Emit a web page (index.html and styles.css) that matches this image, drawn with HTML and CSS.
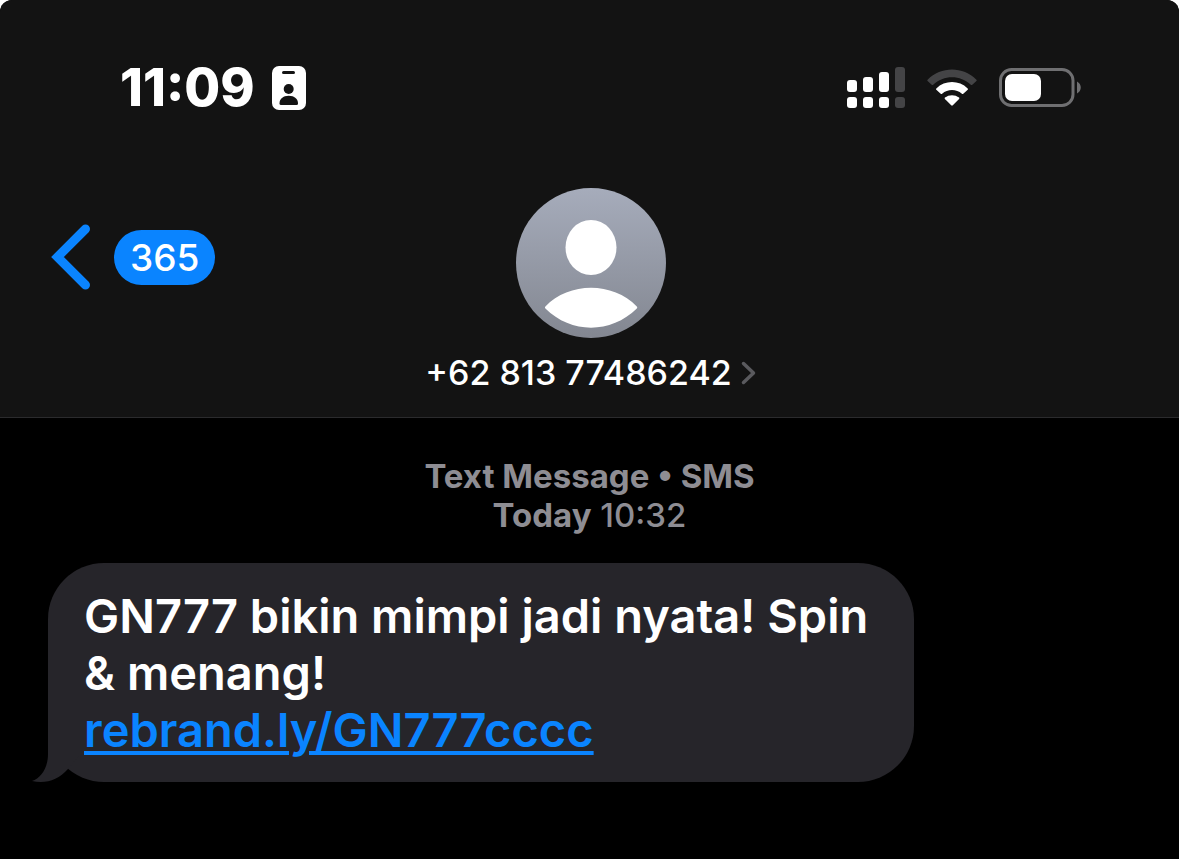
FILE: index.html
```html
<!DOCTYPE html>
<html lang="id">
<head>
<meta charset="utf-8">
<meta name="viewport" content="width=device-width, initial-scale=1">
<title>+62 813 77486242</title>
<link rel="stylesheet" href="styles.css">
</head>
<body>
<div class="screen">
  <header class="header">
    <div class="status">
      <div class="status-group status-left">
        <span class="clock">11:09</span>
        <svg class="badge-icon" viewBox="0 0 34 44" width="34" height="44" aria-hidden="true">
          <rect width="34" height="44" rx="7" fill="#fff"/>
          <rect x="10" y="5" width="13" height="3" rx="1.5" fill="#131313"/>
          <circle cx="16.7" cy="23" r="5" fill="#131313"/>
          <path d="M7.5 37.500C7.500 33 11 29.800 16.700 29.800S26 33 26 37.500Q26 39 24.500 39H9Q7.500 39 7.500 37.500Z" fill="#131313"/>
        </svg>
      </div>
      <div class="status-group status-right">
        <svg viewBox="0 0 58 42" width="58" height="42" aria-hidden="true">
          <g fill="#fff">
            <rect x="0" y="13" width="10" height="12" rx="3"/>
            <rect x="16" y="10" width="10" height="15" rx="3"/>
            <rect x="32" y="5" width="10" height="20" rx="3"/>
            <rect x="0" y="30" width="10" height="11" rx="3"/>
            <rect x="16" y="30" width="10" height="11" rx="3"/>
            <rect x="32" y="30" width="10" height="11" rx="3"/>
          </g>
          <g fill="#444446">
            <rect x="48" y="0" width="10" height="25" rx="3"/>
            <rect x="48" y="30" width="10" height="11" rx="3"/>
          </g>
        </svg>
        <svg class="wifi" viewBox="0 0 50 38" width="50" height="38" aria-hidden="true">
          <path d="M.6 10.700C14 -2.800 36 -2.800 49.400 10.700Q50 11.400 49.400 12L45.300 15.800Q44.500 16.400 43.800 15.800C33.500 5.800 16.500 5.800 6.200 15.800Q5.500 16.400 4.700 15.800L.6 12Q0 11.400 .6 10.700Z" fill="#444446"/>
          <path d="M9.300 19.400C18 11 32 11 40.700 19.400Q41.300 20 40.700 20.700L36.300 24.800Q35.600 25.400 34.900 24.800C29.300 19.800 20.700 19.800 15.100 24.800Q14.400 25.400 13.700 24.800L9.300 20.700Q8.700 20 9.300 19.400Z" fill="#fff"/>
          <path d="M17.900 28.600C22 25.300 28 25.300 32.100 28.600Q32.700 29.200 32.100 29.900L25.800 36.300Q25 37 24.200 36.300L17.900 29.900Q17.300 29.200 17.900 28.600Z" fill="#fff"/>
        </svg>
        <svg viewBox="0 0 83 40" width="83" height="40" aria-hidden="true">
          <rect x="1.500" y="1.500" width="72.500" height="36" rx="11" fill="none" stroke="#6f6f71" stroke-width="3"/>
          <rect x="6" y="6" width="36" height="27" rx="7" fill="#fff"/>
          <path d="M78 13.500C83 16 83 23 78 25.500Z" fill="#6f6f71"/>
        </svg>
      </div>
    </div>
    <nav class="nav">
      <a class="back" href="#" aria-label="Back, 365 unread">
        <svg viewBox="0 0 40 66" width="40" height="66" aria-hidden="true">
          <path d="M34.500 5L6.500 33L34.500 61" fill="none" stroke="#0a84ff" stroke-width="9" stroke-linecap="round" stroke-linejoin="miter"/>
        </svg>
        <span class="count">365</span>
      </a>
      <button class="contact" type="button">
        <svg class="avatar" viewBox="0 0 150 150" width="150" height="150" aria-hidden="true">
          <defs>
            <linearGradient id="avatar-fill" x1="0" y1="0" x2="0" y2="1">
              <stop offset="0" stop-color="#a6acbb"/>
              <stop offset="1" stop-color="#838791"/>
            </linearGradient>
          </defs>
          <circle cx="75" cy="75" r="75" fill="url(#avatar-fill)"/>
          <ellipse cx="75" cy="59.500" rx="25.500" ry="27.500" fill="#fff"/>
          <path d="M29.400 118.500C53 93.500 97 93.500 120.800 118.500Q121.800 119.500 120.800 120.500C95 146 55 146 29.400 120.500Q28.400 119.500 29.400 118.500Z" fill="#fff"/>
        </svg>
        <span class="contact-name">+62 813 77486242
          <svg viewBox="0 0 15 24" width="15" height="24" aria-hidden="true">
            <path d="M2.500 2.500L12.500 12L2.500 21.500" fill="none" stroke="#5a5a5e" stroke-width="3.500" stroke-linecap="round" stroke-linejoin="round"/>
          </svg>
        </span>
      </button>
    </nav>
  </header>
  <main class="thread">
    <p class="stamp"><strong>Text Message • SMS</strong><br><strong>Today</strong> 10:32</p>
    <div class="bubble">
      <p class="message">GN777 bikin mimpi jadi nyata! Spin &amp; menang!<br><a class="link" href="#">rebrand.ly/GN777cccc</a></p>
      <svg class="tail" viewBox="0 0 60 60" width="60" height="60" aria-hidden="true">
        <path d="M16 0V32C16 46 9 56 0 59C14 62 26 58 36 47L50 30V0Z" fill="#26252a"/>
      </svg>
    </div>
  </main>
</div>
</body>
</html>
```
FILE: styles.css
```css
* {
  box-sizing: border-box;
}

body {
  margin: 0;
  background: #fff;
  color: #fff;
  font-family: Inter, "Liberation Sans", sans-serif;
}

.screen {
  display: flex;
  flex-direction: column;
  min-height: 100vh;
  overflow: hidden;
  border-radius: 12px 12px 0 0;
  background: #000;
}

.header {
  padding-bottom: 24px;
  border-bottom: 1px solid #2b2b2d;
  background: #131313;
}

.status {
  display: flex;
  align-items: center;
  justify-content: space-between;
  padding: 58px 97px 0 120px;
}

.status-group {
  display: flex;
  align-items: center;
}

.status-left {
  gap: 17px;
}

.status-right {
  gap: 22px;
}

.clock {
  font-size: 52px;
  font-weight: 800;
  line-height: 60px;
}

.nav {
  display: grid;
  grid-template-columns: 1fr auto 1fr;
  align-items: start;
  padding: 70px 49px 0 51px;
}

.back {
  display: flex;
  align-items: center;
  justify-self: start;
  gap: 23px;
  padding-top: 36px;
  text-decoration: none;
}

.count {
  padding: 0 16px;
  border-radius: 28px;
  background: #0a84ff;
  color: #fff;
  font-size: 37px;
  font-weight: 500;
  line-height: 55px;
}

.contact {
  display: flex;
  flex-direction: column;
  align-items: center;
  gap: 15px;
  padding: 0;
  border: 0;
  background: none;
  color: inherit;
  font-family: inherit;
}

.contact-name {
  display: flex;
  align-items: center;
  gap: 9px;
  font-size: 34px;
  font-weight: 500;
  line-height: 40px;
}

.thread {
  flex: 1;
  padding: 39px 48px 77px;
}

.stamp {
  margin: 0 0 28px;
  color: #8e8d93;
  font-size: 33px;
  font-weight: 500;
  line-height: 39px;
  text-align: center;
}

.stamp strong {
  font-weight: 700;
}

.bubble {
  position: relative;
  width: 80%;
  padding: 24px 36px;
  border-radius: 56px;
  background: #26252a;
}

.message {
  margin: 0;
  font-size: 47px;
  font-weight: 600;
  line-height: 57px;
}

.link {
  color: #0a84ff;
  text-decoration-thickness: 4px;
  text-underline-offset: 4px;
}

.tail {
  position: absolute;
  bottom: 0;
  left: -16px;
}
```
